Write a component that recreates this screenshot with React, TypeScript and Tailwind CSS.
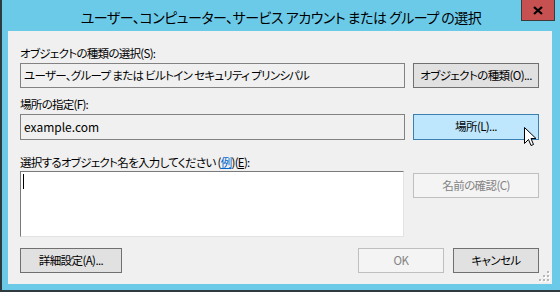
import { ChangeEvent, useState } from 'react';

const font = "font-['Meiryo_UI','Noto_Sans_CJK_JP',sans-serif] [font-feature-settings:'palt']";

function Btn({ children, className = '', disabled = false, hover = false }: { children: React.ReactNode; className?: string; disabled?: boolean; hover?: boolean }) {
  const look = disabled
    ? 'border-[#bfbfbf] bg-[#f4f4f4] text-[#838383]'
    : hover
      ? 'border-[#3c7fb1] bg-[#bee6fd] text-black'
      : 'border-[#707070] bg-[#e1e1e1] text-black';
  return (
    <button
      disabled={disabled}
      className={`flex h-[25px] items-center justify-center whitespace-nowrap border text-[11.5px] leading-none tracking-[-0.6px] ${look} ${className}`}
    >
      {children}
    </button>
  );
}

function Cursor() {
  return (
    <svg className="absolute left-[522px] top-[127px]" width="13" height="21" viewBox="0 0 13 21">
      <path
        d="M0.5 0.5 L0.5 16.5 L4.5 12.5 L7 18.5 L9.5 17.5 L7 11.5 L12 11.5 Z"
        fill="#fff"
        stroke="#000"
        strokeWidth="1"
        strokeLinejoin="miter"
      />
    </svg>
  );
}

function SizeGrip() {
  const dots = [
    [8, 0],
    [4, 4],
    [8, 4],
    [0, 8],
    [4, 8],
    [8, 8],
  ];
  return (
    <svg className="absolute bottom-[2px] right-[2px]" width="11" height="11" viewBox="0 0 11 11">
      {dots.map(([x, y]) => (
        <g key={`${x}-${y}`}>
          <rect x={x + 1} y={y + 1} width="2" height="2" fill="#fff" />
          <rect x={x} y={y} width="2" height="2" fill="#b8b8b8" />
        </g>
      ))}
    </svg>
  );
}

export default function App() {
  const [names, setNames] = useState('');

  return (
    <div className={`relative flex h-[292px] w-[560px] flex-col border-b-2 border-l-2 border-[#2f3a40] bg-[#6ccae9] ${font}`}>
      {/* title bar */}
      <div className="flex h-[31px] shrink-0 items-center justify-center pt-[3px] text-[14px] tracking-[-0.5px] text-black">
        ユーザー、コンピューター、サービス アカウント または グループ の選択
      </div>
      <button className="absolute left-[519px] top-0 flex h-[21px] w-[34px] items-center justify-center border border-t-0 border-[#3b3b3b] bg-[#c75050]">
        <svg width="10" height="9" viewBox="0 0 10 9">
          <path d="M1 1 L9 8 M9 1 L1 8" stroke="#000" strokeWidth="2.2" />
        </svg>
      </button>

      {/* client area */}
      <div className="relative mb-[6px] ml-[6px] mr-[8px] flex flex-1 flex-col bg-[#f0f0f0] pl-[12px] pr-[13px] text-[11.5px] tracking-[-0.7px] text-black">
        <div className="mt-[13px] h-[19px] leading-[19px]">オブジェクトの種類の選択(S):</div>
        <div className="flex gap-[8px]">
          <div className="flex h-[25px] w-[385px] items-center border border-[#828282] px-[3px]">
            ユーザー、グループ または ビルトイン セキュリティ プリンシパル
          </div>
          <Btn className="w-[126px]">オブジェクトの種類(O)...</Btn>
        </div>

        <div className="mt-[7px] h-[19px] leading-[19px]">場所の指定(F):</div>
        <div className="flex gap-[8px]">
          <div className="flex h-[26px] w-[385px] items-center border border-[#828282] px-[3px] text-[12px] tracking-normal">example.com</div>
          <Btn hover className="h-[26px] w-[126px]">場所(L)...</Btn>
        </div>

        <div className="mt-[13px] h-[18px] leading-[18px]">
          選択するオブジェクト名を入力してください (<span className="text-[#0066cc] underline">例</span>)(<span className="underline">E</span>):
        </div>
        <div className="flex items-start gap-[9px]">
          <div className="relative">
            <textarea
              value={names}
              onChange={(e: ChangeEvent<HTMLTextAreaElement>) => setNames(e.target.value)}
              className="block h-[66px] w-[384px] resize-none border border-b-[#e3e3e3] border-l-[#7a7a7a] border-r-[#e3e3e3] border-t-[#7a7a7a] bg-white px-[2px] text-[12px] outline-none"
            />
            {/* text caret */}
            <span className="absolute left-[3px] top-[3px] h-[15px] w-px bg-black" />
          </div>
          <Btn disabled className="mt-[2px] h-[24px] w-[126px]">名前の確認(C)</Btn>
        </div>

        <div className="mt-[11px] flex h-[24px]">
          <Btn className="h-[24px] w-[102px]">詳細設定(A)...</Btn>
          <div className="flex-1" />
          <Btn disabled className="h-[24px] w-[86px]">OK</Btn>
          <Btn className="ml-[9px] h-[24px] w-[86px]">キャンセル</Btn>
        </div>
        <SizeGrip />
      </div>

      <Cursor />
    </div>
  );
}
